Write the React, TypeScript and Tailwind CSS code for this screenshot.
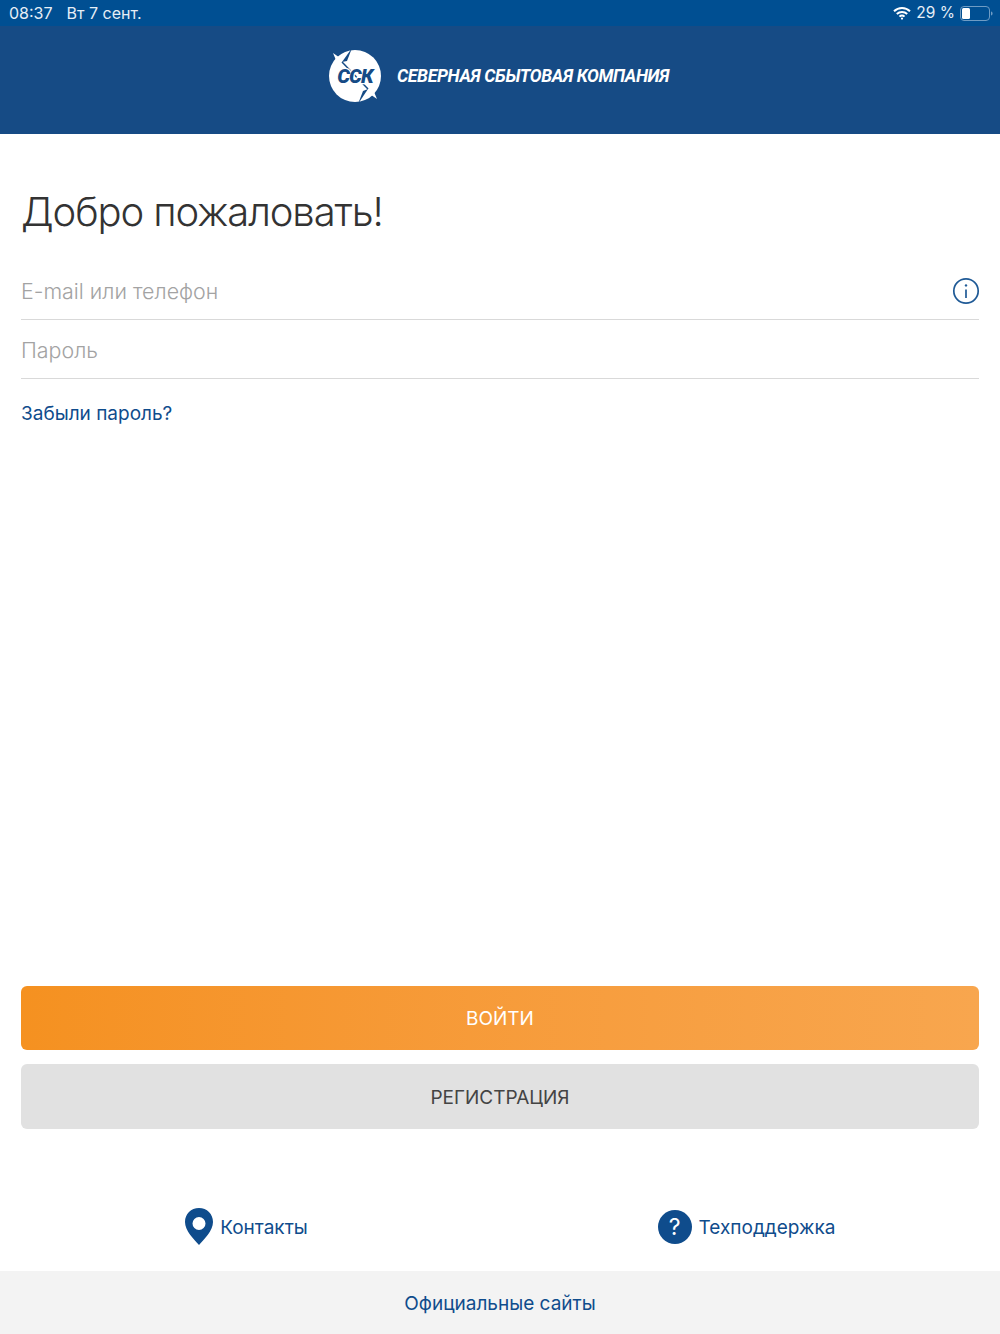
import { useState } from "react";

const font = { fontFamily: "Inter, sans-serif" };

const StatusBar = () => (
  <div className="flex h-[26px] items-center justify-between bg-[#004f92] pl-[9px] pr-[7px] text-[16px] leading-none text-[#e6eef6]">
    <div className="flex items-center gap-[14px]">
      <span>08:37</span>
      <span>Вт 7 сент.</span>
    </div>
    <div className="flex items-center gap-[5px]">
      <svg width="18" height="14" viewBox="0 0 18 14" fill="none" stroke="#fff" strokeWidth="2">
        <path d="M1 5.2a11.5 11.5 0 0 1 16 0" />
        <path d="M3.8 8a7.6 7.6 0 0 1 10.4 0" />
        <path d="M6.5 10.6a3.6 3.6 0 0 1 5 0" />
        <circle cx="9" cy="12.6" r="1.1" fill="#fff" stroke="none" />
      </svg>
      <span className="text-[15.5px]">29 %</span>
      <svg width="33" height="15" viewBox="0 0 33 15" fill="none">
        <rect x="0.5" y="0.5" width="29" height="14" rx="3.5" stroke="#6f9cc4" />
        <rect x="2" y="2" width="8" height="11" rx="1.5" fill="#fff" />
        <path d="M31 5.5c1 .4 1.6 1.1 1.6 2s-.6 1.6-1.6 2z" fill="#6f9cc4" />
      </svg>
    </div>
  </div>
);

const Logo = () => (
  <svg width="54" height="56" viewBox="0 0 54 56">
    <circle cx="26" cy="28" r="26" fill="#fff" />
    <path d="M4 5 L17 14 L9 17 Z" fill="#fff" />
    <path d="M48 51 L35 42 L43 39 Z" fill="#fff" />
    <path d="M23 0 L13 14 L18 13 Z" fill="#164b85" />
    <path d="M29 56 L39 41 L34 43 Z" fill="#164b85" />
    <path d="M13 14 L39 41" stroke="#164b85" strokeWidth="1.5" />
    <text
      x="26"
      y="35"
      textAnchor="middle"
      fontSize="20"
      fontWeight="900"
      fontStyle="italic"
      fill="#164b85"
      stroke="#fff"
      strokeWidth="2.5"
      paintOrder="stroke"
      fontFamily="Roboto, sans-serif"
      letterSpacing="-0.8"
    >
      ССК
    </text>
  </svg>
);

const Field = ({ placeholder, trailing }: { placeholder: string; trailing?: boolean }) => {
  const [value, setValue] = useState("");
  return (
    <div className="flex h-[59px] items-center border-b border-[#d9d9d9]">
      <input
        value={value}
        onChange={(e) => setValue(e.target.value)}
        placeholder={placeholder}
        className="h-full flex-1 bg-transparent pt-[1px] text-[21.400px] font-light text-[#333] outline-none placeholder:text-[#a3a3a3]"
      />
      {trailing && (
        <svg width="28" height="28" viewBox="0 0 28 28" fill="none" stroke="#1f5a96" strokeWidth="1.7" className="mr-[-1px] mt-px">
          <circle cx="14" cy="14" r="12.2" />
          <path d="M14 12.5v8.5" />
          <circle cx="14" cy="8.4" r="1.2" fill="#1f5a96" stroke="none" />
        </svg>
      )}
    </div>
  );
};

export default function App() {
  return (
    <div className="flex h-[1334px] flex-col bg-white" style={font}>
      <StatusBar />
      <header className="flex h-[108px] items-start justify-center gap-[14px] bg-[#164b85] pr-[2px] pt-[22px]">
        <Logo />
        <span className="mt-[18px] font-['Roboto',sans-serif] text-[17.6px] font-bold italic leading-5 tracking-[-0.35px] text-white">
          СЕВЕРНАЯ СБЫТОВАЯ КОМПАНИЯ
        </span>
      </header>

      <main className="flex flex-1 flex-col px-[21px]">
        <h1 className="mt-[51px] text-[40px] font-light leading-[54px] tracking-[-1.1px] text-[#333]">Добро пожаловать!</h1>
        <div className="mt-[22px]">
          <Field placeholder="E-mail или телефон" trailing />
          <Field placeholder="Пароль" />
        </div>
        <a className="mt-[23px] text-[19px] leading-6 text-[#0f4c8c]">Забыли пароль?</a>

        <div className="mt-auto flex flex-col gap-[14px]">
          <button className="h-[64px] rounded-[6px] bg-gradient-to-r from-[#f59120] to-[#f8a64e] pt-[2px] text-[19px] text-white">
            ВОЙТИ
          </button>
          <button className="h-[65px] rounded-[6px] bg-[#e1e1e1] pt-[3px] text-[19px] text-[#444]">РЕГИСТРАЦИЯ</button>
        </div>

        <div className="-mx-[21px] mb-[25px] mt-[79px] grid h-[38px] grid-cols-2 items-center text-[19px] text-[#0f4c8c]">
          <div className="flex items-center justify-center gap-[6px] pr-[8px]">
            <svg width="30" height="37" viewBox="0 0 30 37" className="-mt-px">
              <path
                fillRule="evenodd"
                d="M15 0C7 0 1 6 1 14c0 9 9 17 14 23 5-6 14-14 14-23C29 6 23 0 15 0zm0 9a6.500 6.500 0 1 1 0 13 6.500 6.500 0 0 1 0-13z"
                fill="#0f4c8c"
              />
            </svg>
            <span className="pt-[2px]">Контакты</span>
          </div>
          <div className="flex items-center justify-center gap-[7px] pr-[7px]">
            <span className="flex h-[34px] w-[34px] items-center justify-center rounded-full bg-[#0f4c8c] text-[23px] text-white">
              ?
            </span>
            <span className="pt-[2px]">Техподдержка</span>
          </div>
        </div>
      </main>

      <footer className="flex h-[63px] items-center justify-center bg-[#f3f3f3] pt-[3px] text-[19px] text-[#0f4c8c]">
        Официальные сайты
      </footer>
    </div>
  );
}
